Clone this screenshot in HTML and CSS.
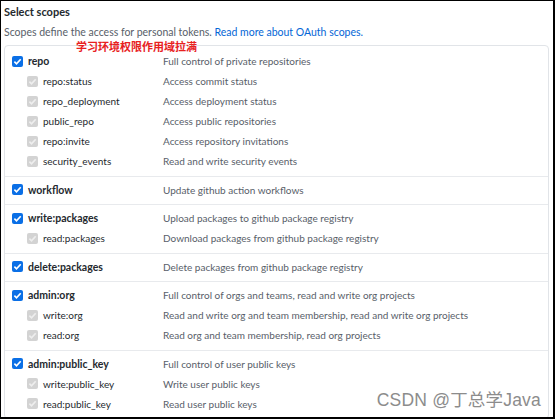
FILE: index.html
```html
<!DOCTYPE html>
<html lang="en">
<head>
    <meta charset="UTF-8">
    <title>Select scopes</title>
    <link rel="stylesheet" href="styles.css">
</head>
<body>
    <div class="frame">
        <h3 class="title">Select scopes</h3>
        <p class="lead">Scopes define the access for personal tokens. <a href="#">Read more about OAuth scopes.</a></p>
        <span class="note">学习环境权限作用域拉满</span>

        <div class="scopes">
            <div class="group">
                <div class="scope top"><span class="box"><svg viewBox="0 0 12 12"><path d="M2.6 6.2l2.3 2.3 4.6-5"/></svg></span><span class="name">repo</span><span class="desc">Full control of private repositories</span></div>
                <div class="scope sub"><span class="box"><svg viewBox="0 0 12 12"><path d="M2.6 6.2l2.3 2.3 4.6-5"/></svg></span><span class="name">repo:status</span><span class="desc">Access commit status</span></div>
                <div class="scope sub"><span class="box"><svg viewBox="0 0 12 12"><path d="M2.6 6.2l2.3 2.3 4.6-5"/></svg></span><span class="name">repo_deployment</span><span class="desc">Access deployment status</span></div>
                <div class="scope sub"><span class="box"><svg viewBox="0 0 12 12"><path d="M2.6 6.2l2.3 2.3 4.6-5"/></svg></span><span class="name">public_repo</span><span class="desc">Access public repositories</span></div>
                <div class="scope sub"><span class="box"><svg viewBox="0 0 12 12"><path d="M2.6 6.2l2.3 2.3 4.6-5"/></svg></span><span class="name">repo:invite</span><span class="desc">Access repository invitations</span></div>
                <div class="scope sub"><span class="box"><svg viewBox="0 0 12 12"><path d="M2.6 6.2l2.3 2.3 4.6-5"/></svg></span><span class="name">security_events</span><span class="desc">Read and write security events</span></div>
            </div>
            <div class="group">
                <div class="scope top"><span class="box"><svg viewBox="0 0 12 12"><path d="M2.6 6.2l2.3 2.3 4.6-5"/></svg></span><span class="name">workflow</span><span class="desc">Update github action workflows</span></div>
            </div>
            <div class="group">
                <div class="scope top"><span class="box"><svg viewBox="0 0 12 12"><path d="M2.6 6.2l2.3 2.3 4.6-5"/></svg></span><span class="name">write:packages</span><span class="desc">Upload packages to github package registry</span></div>
                <div class="scope sub"><span class="box"><svg viewBox="0 0 12 12"><path d="M2.6 6.2l2.3 2.3 4.6-5"/></svg></span><span class="name">read:packages</span><span class="desc">Download packages from github package registry</span></div>
            </div>
            <div class="group">
                <div class="scope top"><span class="box"><svg viewBox="0 0 12 12"><path d="M2.6 6.2l2.3 2.3 4.6-5"/></svg></span><span class="name">delete:packages</span><span class="desc">Delete packages from github package registry</span></div>
            </div>
            <div class="group">
                <div class="scope top"><span class="box"><svg viewBox="0 0 12 12"><path d="M2.6 6.2l2.3 2.3 4.6-5"/></svg></span><span class="name">admin:org</span><span class="desc">Full control of orgs and teams, read and write org projects</span></div>
                <div class="scope sub"><span class="box"><svg viewBox="0 0 12 12"><path d="M2.6 6.2l2.3 2.3 4.6-5"/></svg></span><span class="name">write:org</span><span class="desc">Read and write org and team membership, read and write org projects</span></div>
                <div class="scope sub"><span class="box"><svg viewBox="0 0 12 12"><path d="M2.6 6.2l2.3 2.3 4.6-5"/></svg></span><span class="name">read:org</span><span class="desc">Read org and team membership, read org projects</span></div>
            </div>
            <div class="group">
                <div class="scope top"><span class="box"><svg viewBox="0 0 12 12"><path d="M2.6 6.2l2.3 2.3 4.6-5"/></svg></span><span class="name">admin:public_key</span><span class="desc">Full control of user public keys</span></div>
                <div class="scope sub"><span class="box"><svg viewBox="0 0 12 12"><path d="M2.6 6.2l2.3 2.3 4.6-5"/></svg></span><span class="name">write:public_key</span><span class="desc">Write user public keys</span></div>
                <div class="scope sub"><span class="box"><svg viewBox="0 0 12 12"><path d="M2.6 6.2l2.3 2.3 4.6-5"/></svg></span><span class="name">read:public_key</span><span class="desc">Read user public keys</span></div>
            </div>
        </div>

        <span class="mark">CSDN @丁总学Java</span>
    </div>
</body>
</html>
```

FILE: styles.css
```css
body {
    margin: 0;
    font-family: 'Lato', 'Noto Sans', sans-serif;
    background-color: #fff;
}

.frame {
    position: relative;
    box-sizing: border-box;
    width: 555px;
    height: 419px;
    overflow: hidden;
    border-style: solid;
    border-color: #000;
    border-width: 1px 2px 2px 1px;
    padding: 0 4px 0 3px;
    color: #24292e;
}

.title {
    margin: 3px 0 0 0;
    font-size: 11px;
    font-weight: 700;
    line-height: 16px;
}

.lead {
    margin: 4px 0 0 0;
    font-size: 10.5px;
    line-height: 16px;
    color: #586069;
}

.lead a {
    color: #0366d6;
    text-decoration: none;
}

/* red annotation over the card */
.note {
    position: absolute;
    left: 75px;
    top: 37px;
    font-family: 'Noto Sans CJK SC', sans-serif;
    font-size: 11px;
    font-weight: 700;
    line-height: 16px;
    color: #e8211e;
}

.scopes {
    margin-top: 5px;
    border: 1px solid #e1e4e8;
    border-radius: 4px;
}

.group {
    padding: 3px 0 4.5px 0;
    border-top: 1px solid #e8eaed;
}

.group:first-child {
    border-top: none;
    padding-top: 5px;
}

.scope {
    display: flex;
    align-items: center;
    height: 20px;
    font-size: 10px;
}

.box {
    flex: none;
    width: 11px;
    height: 11px;
    border-radius: 2px;
    margin-right: 5px;
    display: flex;
}

.box svg {
    width: 11px;
    height: 11px;
    fill: none;
    stroke: #fff;
    stroke-width: 1.8;
}

.top .box {
    margin-left: 7px;
    background-color: #0a6fe6;
}

.sub .box {
    margin-left: 22px;
    background-color: #d3d3d3;
}

.sub .box svg {
    stroke: #eeeeee;
}

.name {
    flex: none;
}

.top .name {
    width: 135px;
    font-size: 10.5px;
    font-weight: 700;
}

.sub .name {
    width: 120px;
}

.desc {
    color: #586069;
    white-space: nowrap;
}

.mark {
    position: absolute;
    right: 12px;
    bottom: 7px;
    font-family: 'Liberation Sans', 'Noto Sans CJK SC', sans-serif;
    font-size: 17.5px;
    line-height: 20px;
    color: #8c8c8c;
    letter-spacing: 0.2px;
}
```
